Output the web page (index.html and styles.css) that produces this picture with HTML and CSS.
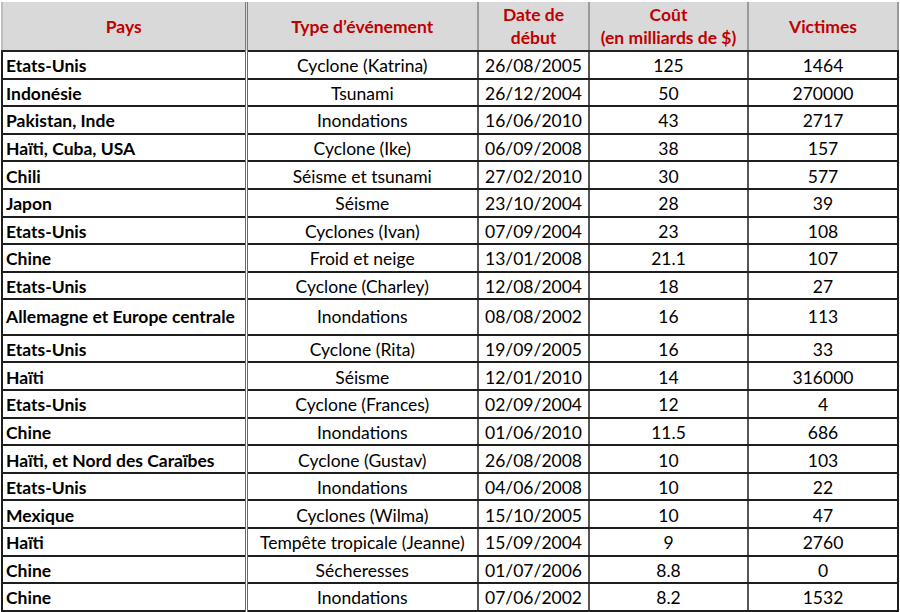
FILE: index.html
```html
<!DOCTYPE html>
<html lang="fr">
<head>
<meta charset="utf-8">
<title>Catastrophes naturelles</title>
<link rel="stylesheet" href="styles.css">
</head>
<body>
<table class="grid">
  <colgroup>
    <col class="c1"><col class="c2"><col class="c3"><col class="c4"><col class="c5">
  </colgroup>
  <thead>
    <tr class="head">
      <th>Pays</th>
      <th>Type d’événement</th>
      <th>Date de<br>début</th>
      <th>Coût<br>(en milliards de $)</th>
      <th>Victimes</th>
    </tr>
  </thead>
  <tbody>
    <tr><td>Etats-Unis</td><td>Cyclone (Katrina)</td><td>26/08/2005</td><td>125</td><td>1464</td></tr>
    <tr><td>Indonésie</td><td>Tsunami</td><td>26/12/2004</td><td>50</td><td>270000</td></tr>
    <tr><td>Pakistan, Inde</td><td>Inondations</td><td>16/06/2010</td><td>43</td><td>2717</td></tr>
    <tr><td>Haïti, Cuba, USA</td><td>Cyclone (Ike)</td><td>06/09/2008</td><td>38</td><td>157</td></tr>
    <tr><td>Chili</td><td>Séisme et tsunami</td><td>27/02/2010</td><td>30</td><td>577</td></tr>
    <tr><td>Japon</td><td>Séisme</td><td>23/10/2004</td><td>28</td><td>39</td></tr>
    <tr><td>Etats-Unis</td><td>Cyclones (Ivan)</td><td>07/09/2004</td><td>23</td><td>108</td></tr>
    <tr><td>Chine</td><td>Froid et neige</td><td>13/01/2008</td><td>21.1</td><td>107</td></tr>
    <tr><td>Etats-Unis</td><td>Cyclone (Charley)</td><td>12/08/2004</td><td>18</td><td>27</td></tr>
    <tr class="tall"><td>Allemagne et Europe centrale</td><td>Inondations</td><td>08/08/2002</td><td>16</td><td>113</td></tr>
    <tr><td>Etats-Unis</td><td>Cyclone (Rita)</td><td>19/09/2005</td><td>16</td><td>33</td></tr>
    <tr><td>Haïti</td><td>Séisme</td><td>12/01/2010</td><td>14</td><td>316000</td></tr>
    <tr><td>Etats-Unis</td><td>Cyclone (Frances)</td><td>02/09/2004</td><td>12</td><td>4</td></tr>
    <tr><td>Chine</td><td>Inondations</td><td>01/06/2010</td><td>11.5</td><td>686</td></tr>
    <tr><td>Haïti, et Nord des Caraïbes</td><td>Cyclone (Gustav)</td><td>26/08/2008</td><td>10</td><td>103</td></tr>
    <tr><td>Etats-Unis</td><td>Inondations</td><td>04/06/2008</td><td>10</td><td>22</td></tr>
    <tr><td>Mexique</td><td>Cyclones (Wilma)</td><td>15/10/2005</td><td>10</td><td>47</td></tr>
    <tr><td>Haïti</td><td>Tempête tropicale (Jeanne)</td><td>15/09/2004</td><td>9</td><td>2760</td></tr>
    <tr><td>Chine</td><td>Sécheresses</td><td>01/07/2006</td><td>8.8</td><td>0</td></tr>
    <tr><td>Chine</td><td>Inondations</td><td>07/06/2002</td><td>8.2</td><td>1532</td></tr>
  </tbody>
</table>
</body>
</html>
```

FILE: styles.css
```css
html, body {
  margin: 0;
  padding: 0;
  background: #ffffff;
}

body {
  font-family: Lato, "Open Sans", "Liberation Sans", sans-serif;
  font-size: 17.5px;
  color: #000000;
}

.grid {
  border-collapse: collapse;
  table-layout: fixed;
  width: 896px;
  margin: 2px 0 0 1px;
}

.c1 { width: 244px; }
.c2 { width: 232px; }
.c3 { width: 111px; }
.c4 { width: 159px; }
.c5 { width: 150px; }

.head th {
  background: #d9d9d9;
  color: #c00000;
  font-weight: bold;
  font-size: 17.5px;
  height: 48px;
  padding: 0;
  line-height: 23px;
  text-align: center;
  vertical-align: middle;
  border-left: 2px solid #9a9a9a;
  border-right: 2px solid #9a9a9a;
  border-bottom: 2px solid #222222;
  border-top: 0;
}

.head th:first-child {
  border-left-color: #bdbdbd;
}

.head th:nth-child(2) {
  border-left: 3px double #7a7a7a;
}

tbody td {
  height: 23.6px;
  padding: 2px 3px 0 3px;
  text-align: center;
  vertical-align: middle;
  border-top: 2px solid #1e1e1e;
  border-bottom: 2px solid #1e1e1e;
  border-left: 2px solid #555555;
  border-right: 2px solid #555555;
  white-space: nowrap;
  line-height: 19px;
}

tbody td:first-child {
  text-align: left;
  font-weight: bold;
  border-left-color: #1e1e1e;
}

tbody td:nth-child(2) {
  border-left: 3px double #6a6a6a;
}

tbody td:last-child {
  border-right-color: #1e1e1e;
}

tbody tr.tall td {
  height: 27.5px;
  padding-bottom: 4px;
}
```
